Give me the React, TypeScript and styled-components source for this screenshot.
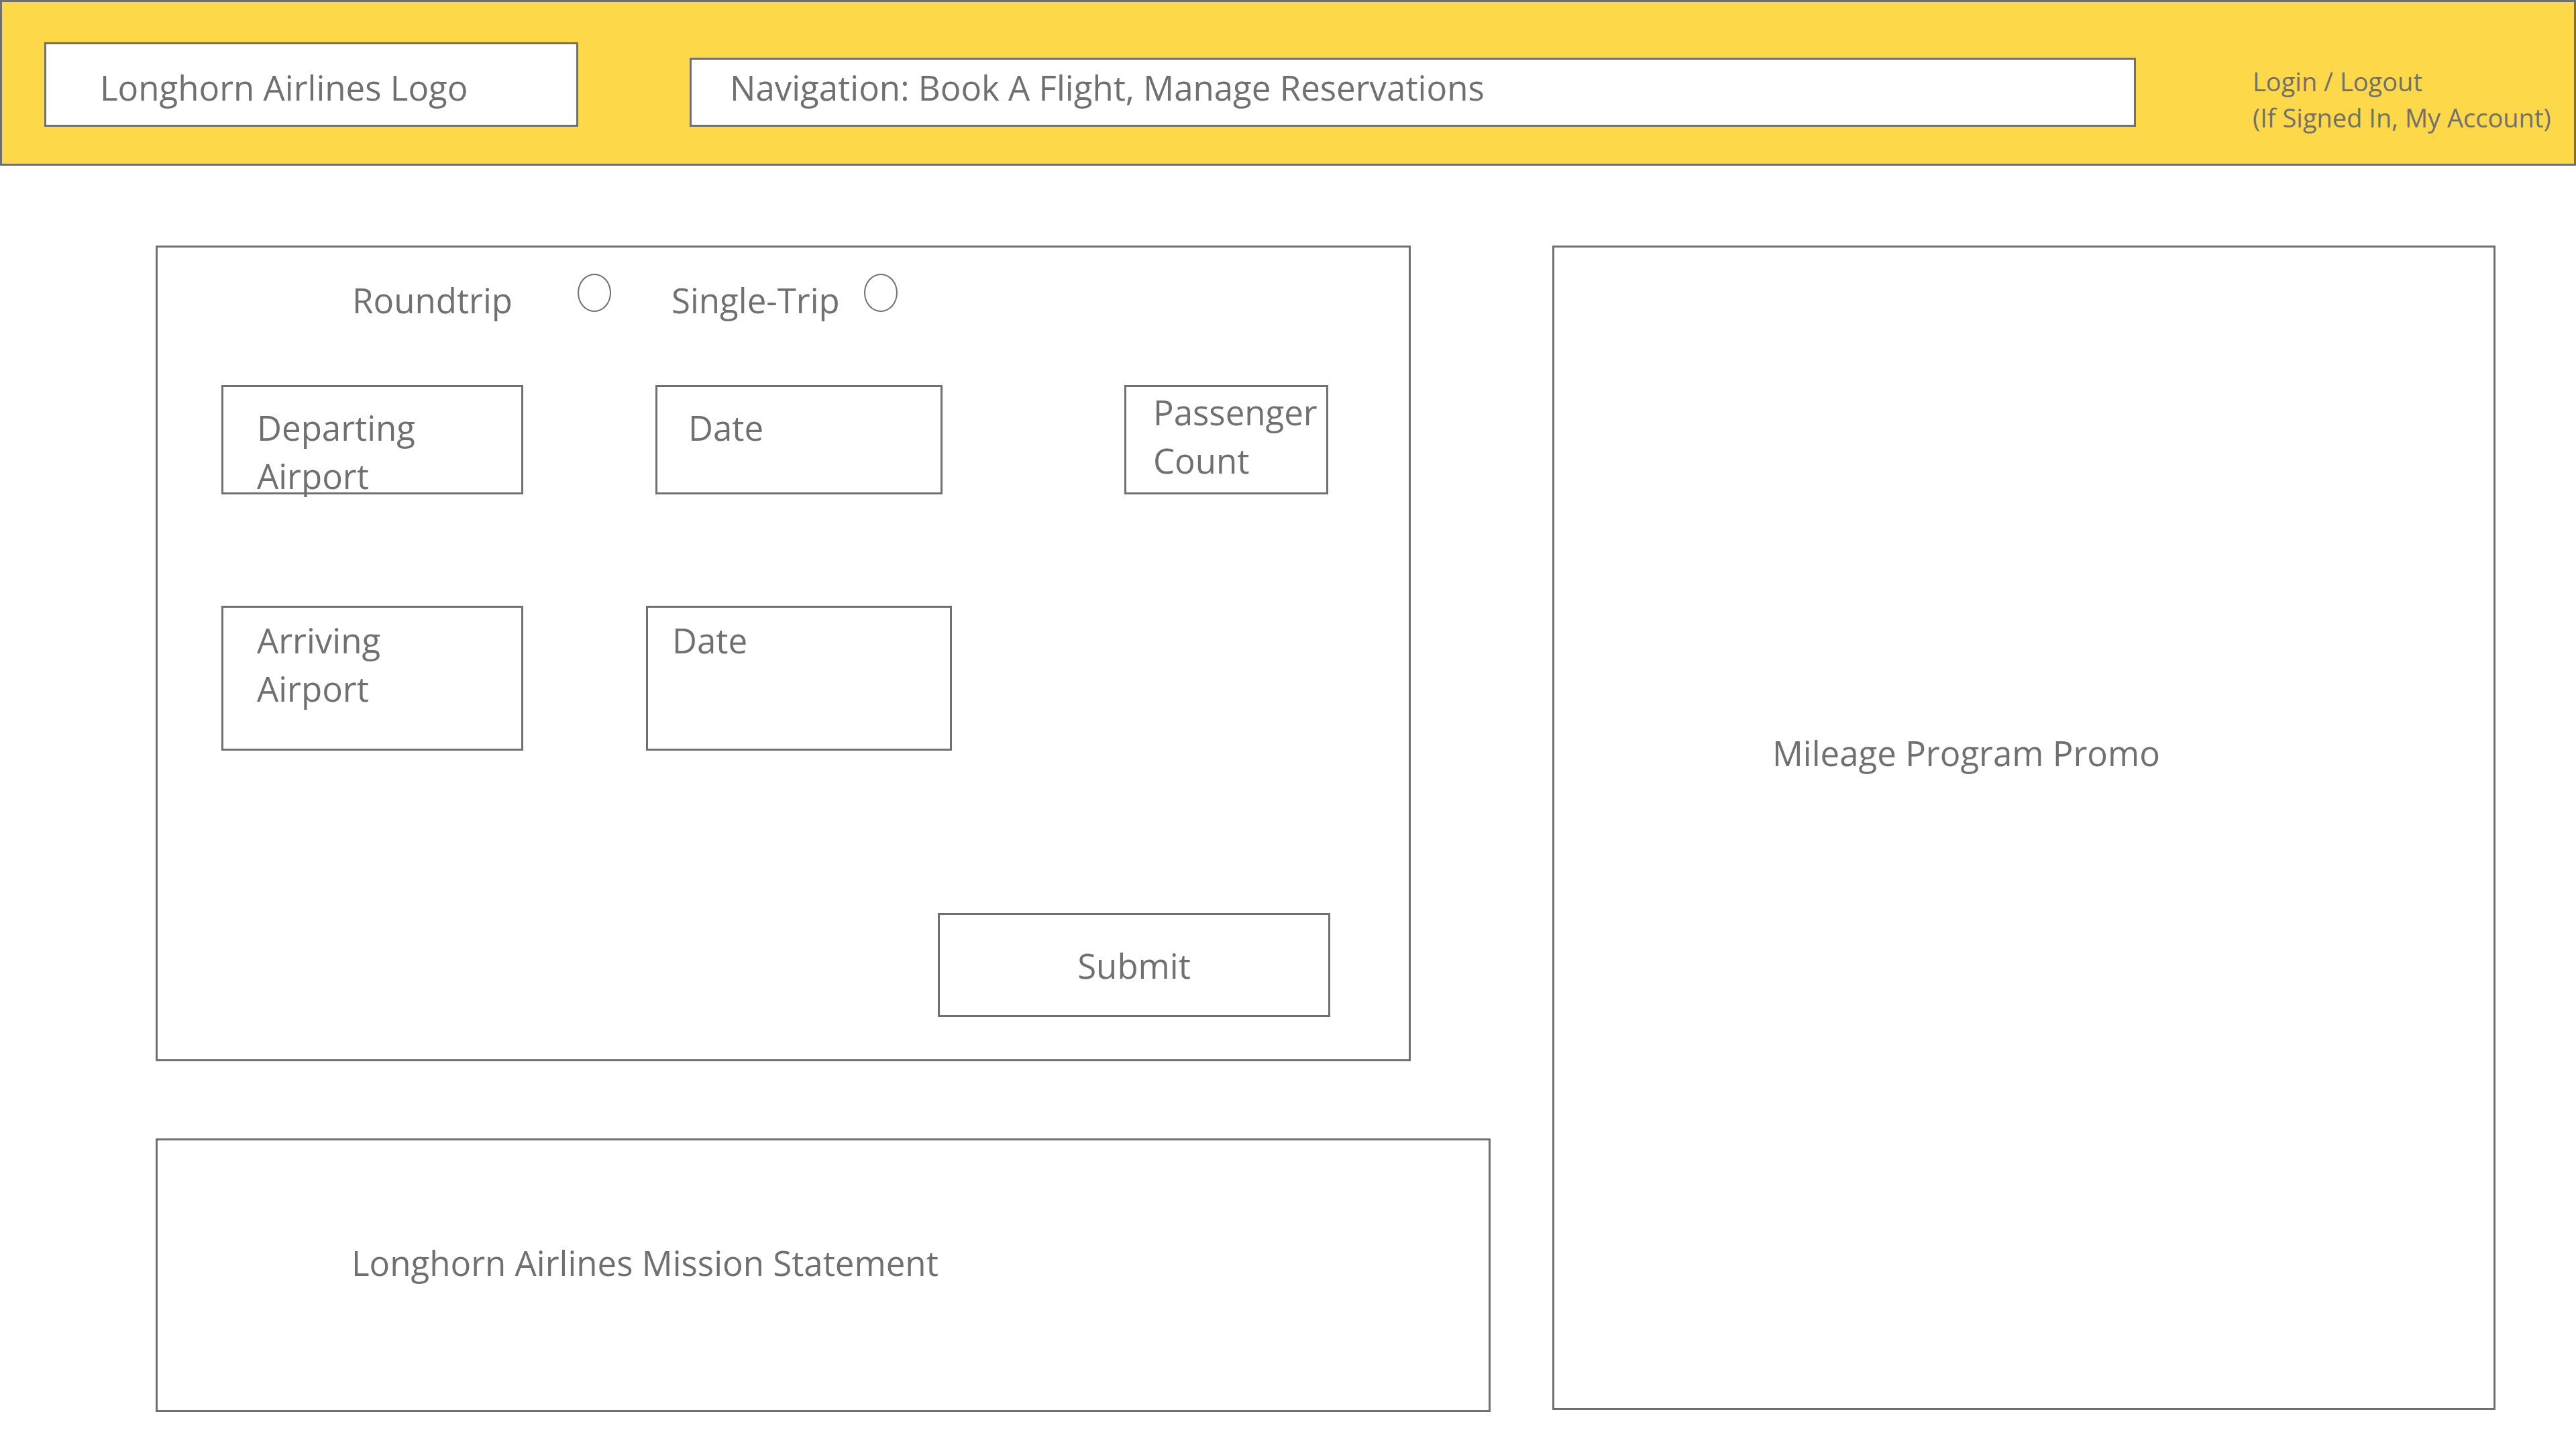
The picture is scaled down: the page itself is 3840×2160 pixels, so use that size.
import React from 'react';
import styled, { createGlobalStyle } from 'styled-components';

const GlobalStyle = createGlobalStyle`
  html, body {
    margin: 0;
    padding: 0;
    background: #ffffff;
  }
  body {
    width: 3840px;
    height: 2160px;
    overflow: hidden;
    font-family: 'Open Sans', 'Noto Sans', sans-serif;
    color: #707070;
  }
  * {
    box-sizing: border-box;
  }
`;

const LINE = '#707070';

type FieldSpec = {
  label: string[];
  w: number;
  ml: number;
  pl: number;
  pt: number;
};

const topRow: FieldSpec[] = [
  { label: ['Departing', 'Airport'], w: 450, ml: 95, pl: 50, pt: 24 },
  { label: ['Date'], w: 428, ml: 197, pl: 46, pt: 24 },
  { label: ['Passenger', 'Count'], w: 304, ml: 271, pl: 40, pt: 1 },
];

const bottomRow: FieldSpec[] = [
  { label: ['Arriving', 'Airport'], w: 450, ml: 95, pl: 50, pt: 12 },
  { label: ['Date'], w: 456, ml: 183, pl: 36, pt: 12 },
];

const App: React.FC = () => {
  const renderField = (f: FieldSpec, i: number) => (
    <Field key={i} $w={f.w} $ml={f.ml} $pl={f.pl} $pt={f.pt}>
      {f.label.map((line) => (
        <div key={line}>{line}</div>
      ))}
    </Field>
  );

  return (
    <>
      <GlobalStyle />
      <Page>
        <Header>
          <LogoBox>Longhorn Airlines Logo</LogoBox>
          <NavBox>Navigation: Book A Flight, Manage Reservations</NavBox>
          <Account>
            <div>Login / Logout</div>
            <div>(If Signed In, My Account)</div>
          </Account>
        </Header>

        <Main>
          <LeftColumn>
            <BookingForm>
              <TripRow>
                <TripLabel $w={336}>Roundtrip</TripLabel>
                <Radio />
                <TripLabel $w={287} $ml={90}>Single-Trip</TripLabel>
                <Radio />
              </TripRow>

              <FieldRow $h={163} $mt={109}>
                {topRow.map(renderField)}
              </FieldRow>

              <FieldRow $h={216} $mt={166}>
                {bottomRow.map(renderField)}
              </FieldRow>

              <SubmitRow>
                <SubmitButton type="button">Submit</SubmitButton>
              </SubmitRow>
            </BookingForm>

            <MissionBox>Longhorn Airlines Mission Statement</MissionBox>
          </LeftColumn>

          <PromoBox>Mileage Program Promo</PromoBox>
        </Main>
      </Page>
    </>
  );
};

export default App;

const Page = styled.div`
  width: 3840px;
  height: 2160px;
  display: flex;
  flex-direction: column;
`;

const Header = styled.header`
  height: 247px;
  background: #fdd848;
  border: 3px solid ${LINE};
  display: flex;
  align-items: flex-start;
  padding-left: 63px;
`;

const BoxText = styled.div`
  font-size: 51px;
  line-height: 72px;
  white-space: nowrap;
`;

const LogoBox = styled(BoxText)`
  width: 796px;
  height: 126px;
  margin-top: 60px;
  padding: 28px 0 0 80px;
  background: #ffffff;
  border: 3px solid ${LINE};
`;

const NavBox = styled(BoxText)`
  width: 2156px;
  height: 103px;
  margin: 83px 0 0 166px;
  padding: 5px 0 0 57px;
  background: #ffffff;
  border: 3px solid ${LINE};
`;

const Account = styled.div`
  margin: 91px 0 0 174px;
  font-size: 38px;
  line-height: 54px;
  white-space: nowrap;
`;

const Main = styled.main`
  display: flex;
  padding: 119px 0 0 232px;
  gap: 92px;
`;

const LeftColumn = styled.div`
  width: 1990px;
  display: flex;
  flex-direction: column;
  gap: 115px;
`;

const BookingForm = styled.section`
  width: 1871px;
  height: 1216px;
  border: 3px solid ${LINE};
  display: flex;
  flex-direction: column;
`;

const TripRow = styled.div`
  display: flex;
  align-items: flex-start;
  height: 57px;
  margin-top: 39px;
  padding-left: 290px;
`;

const TripLabel = styled(BoxText)<{ $w: number; $ml?: number }>`
  width: ${(p) => p.$w}px;
  margin: 3px 0 0 ${(p) => p.$ml ?? 0}px;
`;

const Radio = styled.span`
  width: 50px;
  height: 57px;
  border: 2px solid ${LINE};
  border-radius: 50%;
  flex-shrink: 0;
`;

const FieldRow = styled.div<{ $h: number; $mt: number }>`
  display: flex;
  height: ${(p) => p.$h}px;
  margin-top: ${(p) => p.$mt}px;
`;

const Field = styled(BoxText)<{ $w: number; $ml: number; $pl: number; $pt: number }>`
  width: ${(p) => p.$w}px;
  height: 100%;
  margin-left: ${(p) => p.$ml}px;
  padding: ${(p) => p.$pt}px 0 0 ${(p) => p.$pl}px;
  border: 3px solid ${LINE};
  background: transparent;
`;

const SubmitRow = styled.div`
  display: flex;
  justify-content: flex-end;
  margin-top: 242px;
  padding-right: 117px;
`;

const SubmitButton = styled.button`
  width: 585px;
  height: 155px;
  background: #ffffff;
  border: 3px solid ${LINE};
  font-family: inherit;
  font-size: 51px;
  color: #707070;
  display: flex;
  align-items: center;
  justify-content: center;
  padding: 0;
  cursor: pointer;
`;

const MissionBox = styled(BoxText)`
  width: 1990px;
  height: 408px;
  border: 3px solid ${LINE};
  padding: 146px 0 0 289px;
`;

const PromoBox = styled(BoxText)`
  width: 1406px;
  height: 1736px;
  border: 3px solid ${LINE};
  padding: 717px 0 0 325px;
`;
